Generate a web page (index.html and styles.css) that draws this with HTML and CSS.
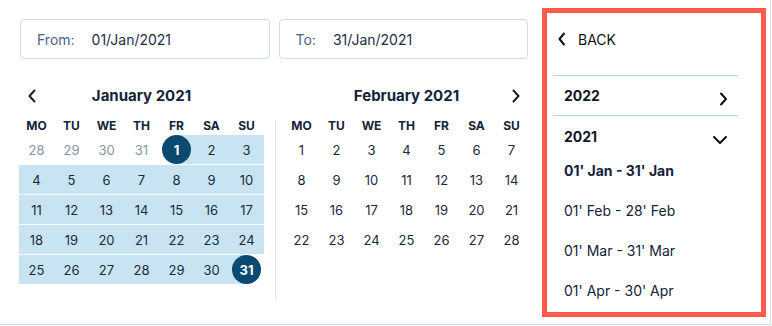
FILE: index.html
```html
<!DOCTYPE html>
<html lang="en">
<head>
<meta charset="utf-8">
<title>Date range picker</title>
<link rel="stylesheet" href="styles.css">
</head>
<body>
<div class="frame">
  <div class="main">
    <div class="inputs">
      <div class="field"><span class="field-label">From:</span><span class="field-value">01/Jan/2021</span></div>
      <div class="field"><span class="field-label">To:</span><span class="field-value">31/Jan/2021</span></div>
    </div>
    <div class="calendars">
      <div class="month">
        <div class="month-head">
          <span class="nav"><svg width="10" height="14" viewBox="0 0 10 14"><path d="M7.5 1.5 L2.5 7 L7.5 12.5" fill="none" stroke="#13233a" stroke-width="2" stroke-linecap="round" stroke-linejoin="round"/></svg></span>
          <span class="month-title">January 2021</span>
          <span class="nav"></span>
        </div>
        <div class="grid">
          <span class="dow">MO</span><span class="dow">TU</span><span class="dow">WE</span><span class="dow">TH</span><span class="dow">FR</span><span class="dow">SA</span><span class="dow">SU</span>
          <span class="day muted">28</span><span class="day muted">29</span><span class="day muted">30</span><span class="day muted">31</span><span class="day start"><b class="sel">1</b></span><span class="day range">2</span><span class="day range">3</span>
          <span class="day range">4</span><span class="day range">5</span><span class="day range">6</span><span class="day range">7</span><span class="day range">8</span><span class="day range">9</span><span class="day range">10</span>
          <span class="day range">11</span><span class="day range">12</span><span class="day range">13</span><span class="day range">14</span><span class="day range">15</span><span class="day range">16</span><span class="day range">17</span>
          <span class="day range">18</span><span class="day range">19</span><span class="day range">20</span><span class="day range">21</span><span class="day range">22</span><span class="day range">23</span><span class="day range">24</span>
          <span class="day range">25</span><span class="day range">26</span><span class="day range">27</span><span class="day range">28</span><span class="day range">29</span><span class="day range">30</span><span class="day end"><b class="sel">31</b></span>
        </div>
      </div>
      <div class="divider"></div>
      <div class="month">
        <div class="month-head">
          <span class="nav"></span>
          <span class="month-title">February 2021</span>
          <span class="nav"><svg width="10" height="14" viewBox="0 0 10 14"><path d="M2.5 1.5 L7.5 7 L2.5 12.5" fill="none" stroke="#13233a" stroke-width="2" stroke-linecap="round" stroke-linejoin="round"/></svg></span>
        </div>
        <div class="grid">
          <span class="dow">MO</span><span class="dow">TU</span><span class="dow">WE</span><span class="dow">TH</span><span class="dow">FR</span><span class="dow">SA</span><span class="dow">SU</span>
          <span class="day">1</span><span class="day">2</span><span class="day">3</span><span class="day">4</span><span class="day">5</span><span class="day">6</span><span class="day">7</span>
          <span class="day">8</span><span class="day">9</span><span class="day">10</span><span class="day">11</span><span class="day">12</span><span class="day">13</span><span class="day">14</span>
          <span class="day">15</span><span class="day">16</span><span class="day">17</span><span class="day">18</span><span class="day">19</span><span class="day">20</span><span class="day">21</span>
          <span class="day">22</span><span class="day">23</span><span class="day">24</span><span class="day">25</span><span class="day">26</span><span class="day">27</span><span class="day">28</span>
        </div>
      </div>
    </div>
  </div>
  <aside class="panel">
    <div class="back">
      <svg width="10" height="14" viewBox="0 0 10 14"><path d="M7 1.5 L2.5 7 L7 12.5" fill="none" stroke="#111" stroke-width="2" stroke-linecap="round" stroke-linejoin="round"/></svg>
      <span>BACK</span>
    </div>
    <div class="years">
      <div class="year-row closed">
        <span class="year">2022</span>
        <svg width="12" height="14" viewBox="0 0 12 14"><path d="M4 1.5 L9 7 L4 12.5" fill="none" stroke="#111" stroke-width="2" stroke-linecap="round" stroke-linejoin="round"/></svg>
      </div>
      <div class="year-row open">
        <span class="year">2021</span>
        <svg width="16" height="10" viewBox="0 0 16 10"><path d="M2 2 L8 8 L14 2" fill="none" stroke="#111" stroke-width="2" stroke-linecap="round" stroke-linejoin="round"/></svg>
      </div>
      <div class="range-item active">01' Jan - 31' Jan</div>
      <div class="range-item">01' Feb - 28' Feb</div>
      <div class="range-item">01' Mar - 31' Mar</div>
      <div class="range-item">01' Apr - 30' Apr</div>
    </div>
  </aside>
</div>
</body>
</html>
```
FILE: styles.css
```css
* { box-sizing: border-box; }
html, body { margin: 0; padding: 0; background: #fff; }
body {
  font-family: Inter, "Noto Sans", "Liberation Sans", sans-serif;
  color: #13233a;
}
.frame {
  width: 771px;
  height: 325px;
  border-right: 1px solid #d9e4ec;
  border-bottom: 1px solid #c3dfe8;
  display: flex;
  align-items: flex-start;
}
.main {
  width: 510px;
  margin-left: 19px;
  margin-top: 19px;
}
.inputs {
  display: grid;
  grid-template-columns: 1fr 1fr;
  gap: 9px;
  margin-left: 1px;
  margin-right: 1px;
}
.field {
  height: 40px;
  border: 1px solid #cfdbe5;
  border-radius: 4px;
  display: flex;
  align-items: center;
  padding-left: 16px;
  font-size: 14px;
}
.field-label { color: #4a6582; margin-right: 17px; }
.field-value { color: #1b2d45; }
.calendars {
  display: flex;
  align-items: flex-start;
  margin-top: 22px;
}
.month { width: 245px; }
.month-head {
  height: 30px;
  display: grid;
  grid-template-columns: 26px 1fr 26px;
  align-items: center;
}
.nav { display: flex; justify-content: center; align-items: center; }
.month-title {
  text-align: center;
  font-weight: 700;
  font-size: 15px;
  line-height: 26px;
}
.grid {
  display: grid;
  grid-template-columns: repeat(7, 35px);
}
.dow {
  text-align: center;
  font-size: 12px;
  font-weight: 700;
  line-height: 18px;
  padding-top: 6px;
  height: 24px;
}
.day {
  height: 29px;
  margin-bottom: 1px;
  display: flex;
  align-items: center;
  justify-content: center;
  font-size: 13px;
  color: #1b2a3b;
}
.day.muted { color: #8796a5; }
.day.range { background: #c8e4f3; }
.day.start { background: linear-gradient(to right, transparent 50%, #c8e4f3 50%); }
.day.end { background: linear-gradient(to right, #c8e4f3 50%, transparent 50%); }
.sel {
  width: 29px;
  height: 29px;
  border-radius: 50%;
  background: #0b4a70;
  color: #fff;
  display: flex;
  align-items: center;
  justify-content: center;
  font-weight: 700;
}
.divider {
  width: 1px;
  height: 180px;
  margin: 39px 8px 0 11px;
  background: #dfe7ee;
}
.panel {
  margin-left: 13px;
  margin-top: 8px;
  width: 224px;
  height: 309px;
  border: 5px solid #ff5a4b;
}
.back {
  display: flex;
  align-items: center;
  gap: 11px;
  padding-left: 10px;
  margin-top: 19px;
  height: 14px;
  font-size: 14px;
  color: #111;
}
.years {
  margin-top: 29px;
  margin-left: 6px;
  width: 185px;
}
.year-row {
  display: flex;
  justify-content: space-between;
  align-items: center;
  padding-left: 11px;
  padding-right: 9px;
  font-weight: 700;
  font-size: 14px;
  color: #111827;
}
.year-row.closed {
  height: 41px;
  border-top: 1px solid #b9d6e0;
  border-bottom: 1px solid #b9d6e0;
}
.year-row.closed svg { margin-top: 6px; }
.year-row.open {
  height: 34px;
  padding-top: 6px;
  padding-right: 10px;
}
.year-row.open svg { margin-top: 7px; }
.range-item {
  height: 40px;
  display: flex;
  align-items: center;
  padding-left: 11px;
  font-size: 14px;
  color: #13233a;
}
.range-item.active { font-weight: 700; }
```
